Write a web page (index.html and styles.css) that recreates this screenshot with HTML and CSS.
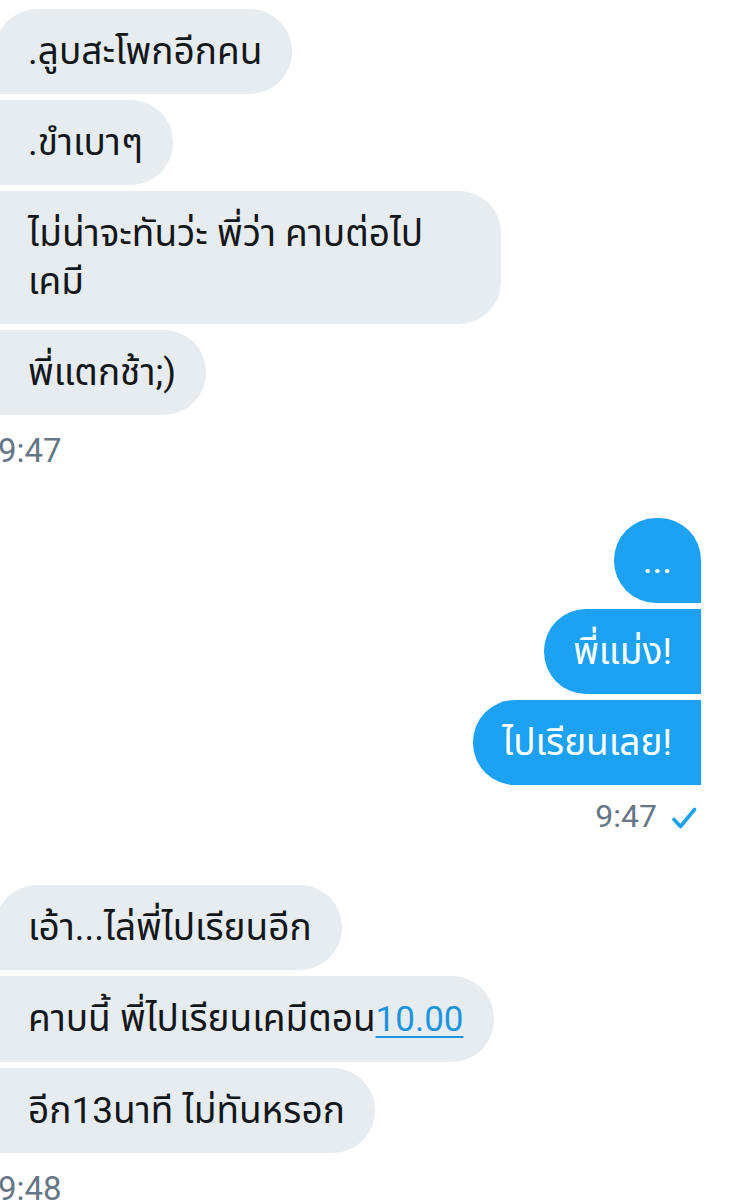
FILE: index.html
```html
<!DOCTYPE html>
<html lang="th">
<head>
<meta charset="utf-8">
<link rel="stylesheet" href="styles.css">
</head>
<body>
<div class="chat">
  <div class="group in">
    <div class="bubble">.ลูบสะโพกอีกคน</div>
    <div class="bubble">.ขำเบาๆ</div>
    <div class="bubble">ไม่น่าจะทันว่ะ พี่ว่า คาบต่อไป เคมี</div>
    <div class="bubble">พี่แตกช้า;)</div>
    <div class="time">9:47</div>
  </div>

  <div class="group out">
    <div class="bubble">...</div>
    <div class="bubble">พี่แม่ง!</div>
    <div class="bubble">ไปเรียนเลย!</div>
    <div class="time">9:47
      <svg class="check" width="26" height="22" viewBox="0 0 26 22" aria-hidden="true"><path d="M3 12.5 L9.5 19.5 L23.5 2.5" fill="none" stroke="#1da1f2" stroke-width="3.6" stroke-linecap="round" stroke-linejoin="round"/></svg>
    </div>
  </div>

  <div class="group in">
    <div class="bubble">เอ้า...ไล่พี่ไปเรียนอีก</div>
    <div class="bubble">คาบนี้ พี่ไปเรียนเคมีตอน<a class="link" href="#">10.00</a></div>
    <div class="bubble">อีก13นาที ไม่ทันหรอก</div>
    <div class="time">9:48</div>
  </div>
</div>
</body>
</html>
```

FILE: styles.css
```css
html, body {
  margin: 0;
  padding: 0;
  background: #ffffff;
}

body {
  width: 730px;
  overflow: hidden;
  font-family: Roboto, "Noto Sans Thai", "Noto Sans", sans-serif;
  color: #14171a;
}

.chat {
  display: flex;
  flex-direction: column;
  padding-top: 9px;
}

.group {
  display: flex;
  flex-direction: column;
  gap: 6px;
}

.group.in {
  align-items: flex-start;
  margin-left: -5px;
}

.group.out {
  align-items: flex-end;
  margin-right: 29px;
  margin-top: 47px;
}

.group.out + .group.in {
  margin-top: 49px;
}

.bubble {
  box-sizing: border-box;
  min-height: 85px;
  padding: 19px 30px 18px 33px;
  font-size: 37px;
  line-height: 48px;
  border-radius: 0 42px 42px 0;
  background: #e6ecf0;
  max-width: 506px;
}

.group.in .bubble:first-child {
  border-top-left-radius: 42px;
}

.group.out .bubble {
  background: #1da1f2;
  color: #ffffff;
  border-radius: 42px 0 0 42px;
  padding: 19px 29px 18px 29px;
  min-width: 85px;
  text-align: right;
}

.group.out .bubble:first-child {
  border-top-right-radius: 42px;
}

.pi {
  letter-spacing: -0.5px;
}

.link {
  color: #1b95e0;
  text-decoration: underline;
  text-underline-offset: 5px;
  text-decoration-thickness: 2px;
  font-size: 35px;
}

.time {
  font-size: 33px;
  line-height: 40px;
  color: #657786;
  margin-top: 10px;
  padding-left: 3px;
}

.group.out .time {
  display: flex;
  align-items: center;
  gap: 14px;
  padding-left: 0;
  margin-top: 5px;
  margin-right: 4px;
  font-size: 32px;
}

.check {
  display: block;
  margin-top: 4px;
}
```
